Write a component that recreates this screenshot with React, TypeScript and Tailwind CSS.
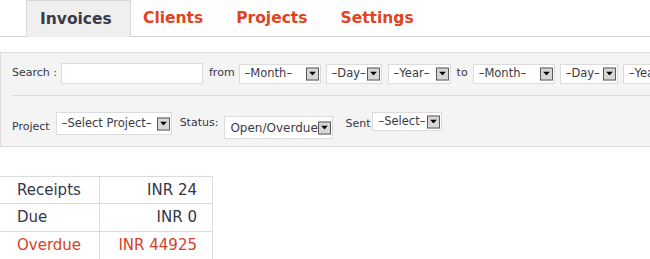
import React from "react";

const font = { fontFamily: '"DejaVu Sans", Verdana, sans-serif' };

function Arrow() {
  return (
    <span className="absolute right-[1px] top-1/2 -translate-y-1/2 w-[13px] h-[13px] bg-[#d6d6d6] border border-[#5a5a5a] flex items-center justify-center">
      <svg width="7" height="4" viewBox="0 0 7 4">
        <path d="M0 0h7L3.5 4z" fill="#000" />
      </svg>
    </span>
  );
}

function FakeSelect({ label, w, h = "h-[20px]", cls = "" }: { label: string; w: string; h?: string; cls?: string }) {
  return (
    <div className={`relative shrink-0 bg-white border border-[#dcdcdc] ${w} ${h} ${cls} flex items-center pl-[5px] text-[11.5px] text-[#3a3a48] whitespace-nowrap overflow-hidden`}>
      {label}
      <Arrow />
    </div>
  );
}

export default function App() {
  return (
    <div className="w-[650px] h-[259px] bg-white overflow-hidden relative" style={font}>
      {/* tabs */}
      <div className="flex items-end h-[37px] border-b border-[#d2d2d2] pl-[26px]">
        <div className="h-[37px] w-[105px] bg-[#efefef] border border-b-0 border-[#d8d8d8] flex items-center pl-[13px] pt-[1px] text-[15.5px] font-bold text-[#3a3a48] -mb-px">
          Invoices
        </div>
        <div className="h-[36px] flex items-center pt-[1px] text-[15.5px] font-bold text-[#e0441f]">
          <span className="ml-[12px]">Clients</span>
          <span className="ml-[33px]">Projects</span>
          <span className="ml-[33px]">Settings</span>
        </div>
      </div>

      {/* filter panel */}
      <div className="mt-[15px] w-[700px] bg-[#f4f4f4] border border-[#dcdcdc] text-[11px] text-[#363648]">
        <div className="flex items-center pl-[11px] pt-[10px] whitespace-nowrap">
          <span>Search :</span>
          <div className="ml-[4px] w-[142px] h-[21px] bg-white border border-[#dcdcdc] shrink-0" />
          <span className="ml-[6px]">from</span>
          <FakeSelect label="–Month–" w="w-[82px]" cls="ml-[4px]" />
          <FakeSelect label="–Day–" w="w-[56px]" cls="ml-[5px]" />
          <FakeSelect label="–Year–" w="w-[63px]" cls="ml-[6px]" />
          <span className="ml-[6px]">to</span>
          <FakeSelect label="–Month–" w="w-[82px]" cls="ml-[5px]" />
          <FakeSelect label="–Day–" w="w-[58px]" cls="ml-[5px]" />
          <FakeSelect label="–Year–" w="w-[63px]" cls="ml-[5px]" />
        </div>
        <div className="ml-[11px] mt-[11px] border-t border-[#dcdcdc]" />
        <div className="flex items-start pl-[11px] pt-[16px] pb-[7px] whitespace-nowrap">
          <span className="mt-[7px]">Project</span>
          <FakeSelect label="–Select Project–" w="w-[116px]" h="h-[23px]" cls="ml-[6px]" />
          <span className="mt-[3px] ml-[8px]">Status:</span>
          <FakeSelect label="Open/Overdue" w="w-[109px]" h="h-[23px]" cls="ml-[6px] mt-[4px] text-[12px]" />
          <span className="mt-[4px] ml-[12px]">Sent</span>
          <FakeSelect label="–Select–" w="w-[70px]" h="h-[19px]" cls="ml-[2px]" />
        </div>
      </div>

      {/* totals */}
      <table className="mt-[29px] w-[213px] border-collapse text-[15px] text-[#363648]">
        <tbody>
          <tr className="h-[27px]">
            <td className="border border-[#dcdcdc] border-l-0 pl-[17px] w-[99px]">Receipts</td>
            <td className="border border-[#dcdcdc] pr-[15px] text-right">INR 24</td>
          </tr>
          <tr className="h-[28px]">
            <td className="border border-[#dcdcdc] border-l-0 pl-[17px]">Due</td>
            <td className="border border-[#dcdcdc] pr-[15px] text-right">INR 0</td>
          </tr>
          <tr className="h-[28px] text-[#d5412a]">
            <td className="border border-[#dcdcdc] border-l-0 pl-[17px]">Overdue</td>
            <td className="border border-[#dcdcdc] pr-[15px] text-right">INR 44925</td>
          </tr>
        </tbody>
      </table>
    </div>
  );
}
